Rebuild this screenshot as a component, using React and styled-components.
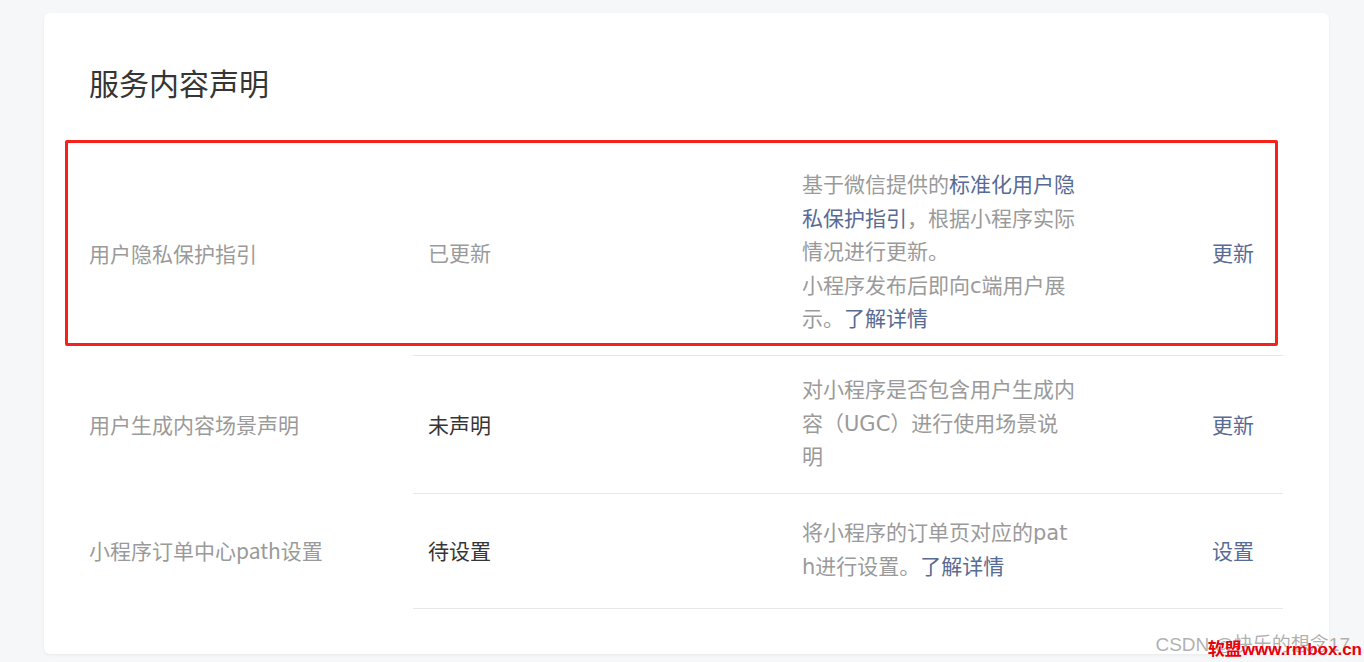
import React from 'react';
import styled, { createGlobalStyle } from 'styled-components';

const GlobalStyle = createGlobalStyle`
  html, body {
    margin: 0;
    padding: 0;
    background: #f6f7f9;
  }
  body {
    font-family: "Noto Sans CJK SC", "Noto Sans", sans-serif;
  }
`

const Page = styled.div`
  position: relative;
  height: 662px;
  padding: 13px 35px 0 44px;
  box-sizing: border-box;
  overflow: hidden;
`

const Card = styled.div`
  background: #fff;
  border-radius: 6px;
  box-shadow: 0 1px 3px rgba(0, 0, 0, 0.06);
  padding: 48px 46px 45px 45px;
`

const Title = styled.h2`
  margin: 0 0 48px;
  font-size: 30px;
  line-height: 42px;
  font-weight: 400;
  color: #353535;
`

const Table = styled.div`
  display: flex;
  flex-direction: column;
`

const Row = styled.div`
  position: relative;
  display: grid;
  grid-template-columns: 324px 374px 410px 1fr;
  min-height: ${p => p.minHeight || 0}px;
`

const Cell = styled.div`
  display: flex;
  align-items: center;
  padding: 18px 0 18px ${p => (p.first ? 0 : 15)}px;
  border-bottom: ${p => (p.first ? 'none' : '1px solid #e7e7e7')};
  font-size: 21px;
  line-height: 33.6px;
  color: ${p => p.color || '#9a9a9a'};
`

const Desc = styled.div`
  width: 274px;
  font-family: "DejaVu Sans", "Noto Sans CJK SC", sans-serif;
  color: #9a9a9a;
  word-break: break-all;
`

const Link = styled.a`
  color: #576b95;
  text-decoration: none;
  cursor: pointer;
`

const Highlight = styled.div`
  position: absolute;
  top: -11px;
  left: -24px;
  right: 5px;
  bottom: 10px;
  border: 3px solid #f5221b;
  border-radius: 2px;
  pointer-events: none;
`

const Watermark = styled.div`
  position: absolute;
  right: 14px;
  bottom: 6px;
  font-family: "Liberation Sans", "Noto Sans CJK SC", sans-serif;
  font-size: 19px;
  color: rgba(150, 150, 150, 0.75);
  white-space: nowrap;
`

const SiteMark = styled.div`
  position: absolute;
  right: 2px;
  bottom: 2px;
  font-family: "Liberation Sans", "Noto Sans CJK SC", sans-serif;
  font-size: 17px;
  font-weight: 700;
  color: #e8000b;
  white-space: nowrap;
`

function App() {
  return (
    <Page>
      <GlobalStyle />
      <Card>
        <Title>服务内容声明</Title>
        <Table>
          <Row>
            <Highlight />
            <Cell first>用户隐私保护指引</Cell>
            <Cell>已更新</Cell>
            <Cell>
              <Desc>
                基于微信提供的<Link>标准化用户隐私保护指引</Link>，根据小程序实际情况进行更新。
                <br />
                小程序发布后即向c端用户展示。<Link>了解详情</Link>
              </Desc>
            </Cell>
            <Cell><Link>更新</Link></Cell>
          </Row>
          <Row>
            <Cell first>用户生成内容场景声明</Cell>
            <Cell color="#353535">未声明</Cell>
            <Cell>
              <Desc>对小程序是否包含用户生成内容（UGC）进行使用场景说明</Desc>
            </Cell>
            <Cell><Link>更新</Link></Cell>
          </Row>
          <Row minHeight={115}>
            <Cell first>小程序订单中心path设置</Cell>
            <Cell color="#353535">待设置</Cell>
            <Cell>
              <Desc>
                将小程序的订单页对应的path进行设置。<Link>了解详情</Link>
              </Desc>
            </Cell>
            <Cell><Link>设置</Link></Cell>
          </Row>
        </Table>
      </Card>
      <Watermark>CSDN @快乐的想念17</Watermark>
      <SiteMark>软盟www.rmbox.cn</SiteMark>
    </Page>
  );
}

export default App;
